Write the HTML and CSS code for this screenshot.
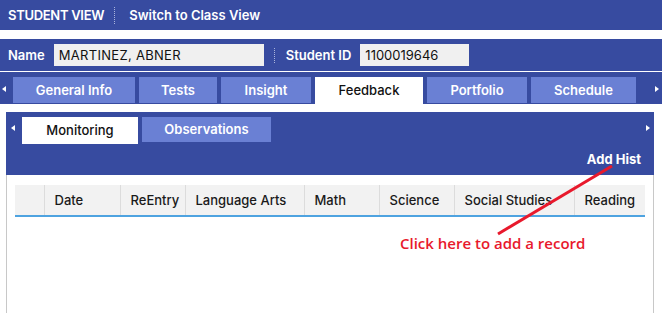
FILE: index.html
```html
<!DOCTYPE html>
<html lang="en">
<head>
  <meta charset="UTF-8" />
  <title>Student View</title>
  <link rel="stylesheet" href="styles.css">
</head>
<body>
  <div class="topbar">
    <span class="topbar-title">STUDENT VIEW</span>
    <span class="dots"></span>
    <a class="topbar-link">Switch to Class View</a>
  </div>

  <div class="idbar">
    <label class="id-label">Name</label>
    <div class="id-field name-field">MARTINEZ, ABNER</div>
    <span class="dots small"></span>
    <label class="id-label">Student ID</label>
    <div class="id-field sid-field">1100019646</div>
  </div>

  <div class="tabbar">
    <span class="arrow left"></span>
    <div class="tabs">
      <div class="tab w-general">General Info</div>
      <div class="tab w-tests">Tests</div>
      <div class="tab w-insight">Insight</div>
      <div class="tab active w-feedback">Feedback</div>
      <div class="tab w-portfolio">Portfolio</div>
      <div class="tab w-schedule">Schedule</div>
    </div>
    <span class="arrow right"></span>
  </div>

  <div class="panel">
    <div class="panel-head">
      <div class="subtabbar">
        <span class="arrow left"></span>
        <div class="subtab active w-monitoring">Monitoring</div>
        <div class="subtab w-observations">Observations</div>
        <span class="arrow right"></span>
      </div>
      <div class="panel-actions">
        <a class="add-hist">Add Hist</a>
      </div>
    </div>

    <div class="panel-body">
      <table class="grid">
        <thead>
          <tr>
            <th class="c-sel"></th>
            <th class="c-date">Date</th>
            <th class="c-reentry">ReEntry</th>
            <th class="c-la">Language Arts</th>
            <th class="c-math">Math</th>
            <th class="c-sci">Science</th>
            <th class="c-ss">Social Studies</th>
            <th class="c-read">Reading</th>
          </tr>
        </thead>
        <tbody></tbody>
      </table>
    </div>

    <!-- annotation drawn over the screenshot -->
    <svg class="callout-line" width="662" height="313" viewBox="0 0 662 313">
      <line x1="612" y1="166" x2="498" y2="234" stroke="#e8192c" stroke-width="3" />
    </svg>
    <div class="callout-text">Click here to add a record</div>
  </div>
</body>
</html>
```

FILE: styles.css
```css
body { margin: 0; font-family: "Inter", "Liberation Sans", sans-serif; font-size: 13px; color: #1a1a1a; background: #fff; position: relative; height: 313px; overflow: hidden; }

/* top strip */
.topbar { height: 30px; background: #374ba0; color: #fff; display: flex; align-items: center; padding-left: 8px; font-weight: 600; }
.topbar-title { letter-spacing: -0.3px; }
.topbar-link { cursor: pointer; }
.dots { width: 0; height: 17px; border-left: 1px dotted #aab4dc; margin: 0 14px 0 10px; }
.dots.small { height: 15px; margin: 0 11px 0 10px; }

/* name / id strip */
.idbar { margin-top: 9px; height: 32px; background: #374ba0; display: flex; align-items: center; padding-left: 8px; }
.id-label { color: #fff; font-weight: 600; margin-right: 9px; }
.id-field { height: 22px; line-height: 22px; background: #f0f0f0; padding-left: 5px; box-sizing: border-box; color: #111; }
.name-field { width: 210px; letter-spacing: 0.3px; }
.sid-field { width: 109px; }

/* main tabs */
.tabbar { height: 32px; border-top: 1px solid #fff; background: #374ba0; display: flex; align-items: flex-end; position: relative; }
.tabs { display: flex; gap: 4px; margin-left: 13px; padding-bottom: 1px; }
.tab { height: 26px; line-height: 26px; background: #6a80d4; color: #fff; font-weight: 600; text-align: center; }
.tab.active { background: #fff; color: #111; font-weight: 500; height: 27px; margin-bottom: -1px; }
.w-general { width: 122px; }
.w-tests { width: 78px; }
.w-insight { width: 90px; }
.w-feedback { width: 108px; }
.w-portfolio { width: 100px; }
.w-schedule { width: 105px; }

.arrow { width: 0; height: 0; border-top: 3.5px solid transparent; border-bottom: 3.5px solid transparent; position: absolute; top: 14px; }
.arrow.left { border-right: 4px solid #fff; left: 2px; }
.arrow.right { border-left: 4px solid #fff; right: 3px; }

/* feedback panel */
.panel { margin: 8px 8px 0 6px; border-left: 1px solid #c8c8c8; border-right: 1px solid #c8c8c8; height: 210px; }
.panel-head { background: #374ba0; margin: 0 -1px; height: 63px; }
.subtabbar { position: relative; display: flex; gap: 4px; padding: 5px 0 0 16px; }
.subtabbar .arrow { top: 13px; }
.subtabbar .arrow.left { left: 5px; }
.subtabbar .arrow.right { right: 4px; }
.subtab { height: 25px; line-height: 25px; background: #6a80d4; color: #fff; font-weight: 600; text-align: center; }
.subtab.active { background: #fff; color: #111; font-weight: 500; height: 27px; line-height: 26px; }
.w-monitoring { width: 116px; }
.w-observations { width: 129px; }
.panel-actions { display: flex; justify-content: flex-end; padding: 7px 13px 0 0; }
.add-hist { color: #fff; font-weight: 700; cursor: pointer; }

.panel-body { padding: 10px 8px 0 8px; }
.grid { width: 630px; border-collapse: collapse; table-layout: fixed; }
.grid th { box-sizing: border-box; height: 31px; background: #f2f2f2; border-left: 1px solid #dcdcdc; border-bottom: 2px solid #4ea3e0; text-align: left; font-weight: 500; padding: 0 0 0 10px; color: #1a1a1a; white-space: nowrap; overflow: hidden; }
.grid th:first-child { border-left: none; }
.c-sel { width: 29px; }
.c-date { width: 76px; }
.c-reentry { width: 65px; }
.c-la { width: 119px; }
.c-math { width: 75px; }
.c-sci { width: 75px; }
.c-ss { width: 120px; }
.c-read { width: 71px; }

/* annotation */
.callout-line { position: absolute; left: 0; top: 0; pointer-events: none; }
.callout-text { position: absolute; left: 400px; top: 233px; color: #e8192c; font-family: "Open Sans", "Liberation Sans", sans-serif; font-size: 15px; font-weight: 600; }
```
